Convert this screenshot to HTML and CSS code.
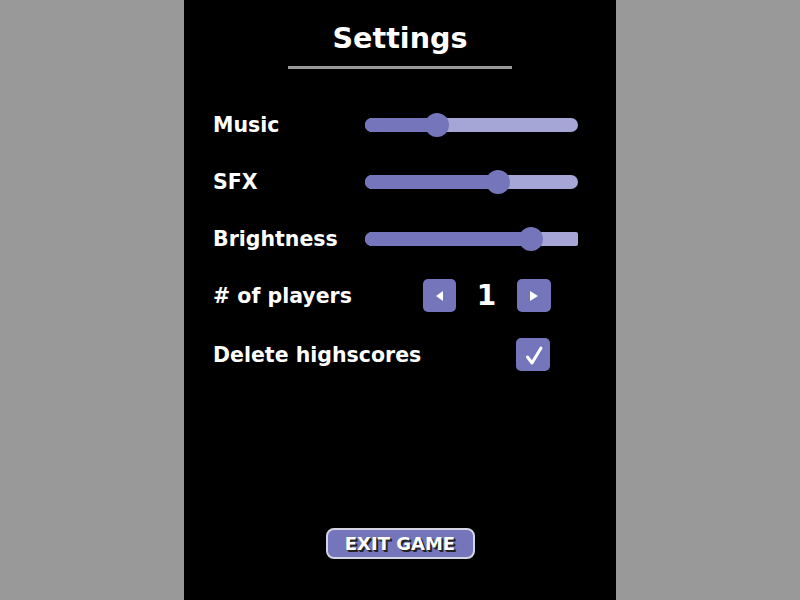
FILE: index.html
```html
<!DOCTYPE html>
<html>
<head>
<meta charset="utf-8">
<link rel="stylesheet" href="styles.css">
</head>
<body>
<div class="panel">
  <h1 class="title">Settings</h1>
  <div class="rule"></div>
  <div class="rows">
    <div class="row">
      <div class="label">Music</div>
      <div class="slider">
        <div class="fill" style="width:34%"></div>
        <div class="thumb" style="left:34%"></div>
      </div>
    </div>
    <div class="row">
      <div class="label">SFX</div>
      <div class="slider">
        <div class="fill" style="width:62.5%"></div>
        <div class="thumb" style="left:62.5%"></div>
      </div>
    </div>
    <div class="row">
      <div class="label">Brightness</div>
      <div class="slider slider-square-end">
        <div class="fill" style="width:78%"></div>
        <div class="thumb" style="left:78%"></div>
      </div>
    </div>
    <div class="row">
      <div class="label"># of players</div>
      <div class="stepper">
        <button class="step-btn" aria-label="decrease">
          <svg width="8" height="10" viewBox="0 0 8 10"><polygon points="7,0 7,10 0,5" fill="#fff"/></svg>
        </button>
        <div class="count">1</div>
        <button class="step-btn step-btn-wide" aria-label="increase">
          <svg width="8" height="10" viewBox="0 0 8 10"><polygon points="0,0 0,10 8,5" fill="#fff"/></svg>
        </button>
      </div>
    </div>
    <div class="row row-last">
      <div class="label">Delete highscores</div>
      <div class="check-wrap">
        <div class="checkbox">
          <svg width="34" height="33" viewBox="0 0 34 33"><polyline points="11.5,19 16,25 25,10" fill="none" stroke="#fff" stroke-width="3" stroke-linecap="round" stroke-linejoin="round"/></svg>
        </div>
      </div>
    </div>
  </div>
  <div class="footer">
    <button class="exit-btn">EXIT GAME</button>
  </div>
</div>
</body>
</html>
```
FILE: styles.css
```css
html, body {
  margin: 0;
  padding: 0;
  height: 100%;
}
body {
  background: #999999;
  font-family: "DejaVu Sans", Verdana, sans-serif;
  font-weight: bold;
  color: #fff;
}
.panel {
  width: 432px;
  height: 600px;
  margin: 0 auto;
  background: #000;
  box-sizing: border-box;
  padding-top: 20px;
  padding-bottom: 41px;
  display: flex;
  flex-direction: column;
}
.title {
  margin: 0;
  font-size: 28.6px;
  line-height: 36px;
  text-align: center;
  font-weight: bold;
}
.rule {
  width: 224px;
  height: 3px;
  background: #999999;
  margin: 10px auto 0;
}
.rows {
  margin-top: 27px;
  display: flex;
  flex-direction: column;
}
.row {
  height: 57px;
  display: grid;
  grid-template-columns: 152px 213px;
  align-items: center;
  padding-left: 29px;
}
.row-last {
  padding-top: 2px;
}
.label {
  font-size: 20.5px;
  white-space: nowrap;
}
.slider {
  position: relative;
  height: 14px;
  border-radius: 7px;
  background: #a6a6d6;
}
.slider-square-end {
  border-radius: 7px 2px 2px 7px;
}
.fill {
  height: 100%;
  border-radius: 7px 0 0 7px;
  background: #7575bb;
}
.thumb {
  position: absolute;
  top: 50%;
  width: 24px;
  height: 24px;
  margin: -12px 0 0 -12px;
  border-radius: 50%;
  background: #7575bb;
}
.stepper {
  display: flex;
  align-items: center;
  padding-left: 58px;
}
.step-btn {
  width: 33px;
  height: 33px;
  border: none;
  padding: 0;
  border-radius: 5px;
  background: #7575bb;
  display: flex;
  align-items: center;
  justify-content: center;
}
.step-btn-wide {
  width: 34px;
}
.count {
  width: 61px;
  text-align: center;
  font-size: 28px;
  line-height: 33px;
}
.check-wrap {
  padding-left: 151px;
  display: flex;
}
.checkbox {
  width: 34px;
  height: 33px;
  border-radius: 5px;
  background: #7575bb;
  display: flex;
}
.footer {
  margin-top: auto;
  display: flex;
  justify-content: center;
}
.exit-btn {
  width: 149px;
  height: 31px;
  padding: 0;
  border: 2px solid #d4d4e4;
  border-radius: 8px;
  background: #7575bb;
  color: #fff;
  font-family: "DejaVu Sans", Verdana, sans-serif;
  font-weight: bold;
  font-size: 18px;
  line-height: 26px;
  text-shadow: 1px 1px 0 #222, 2px 2px 0 #222;
}
```
